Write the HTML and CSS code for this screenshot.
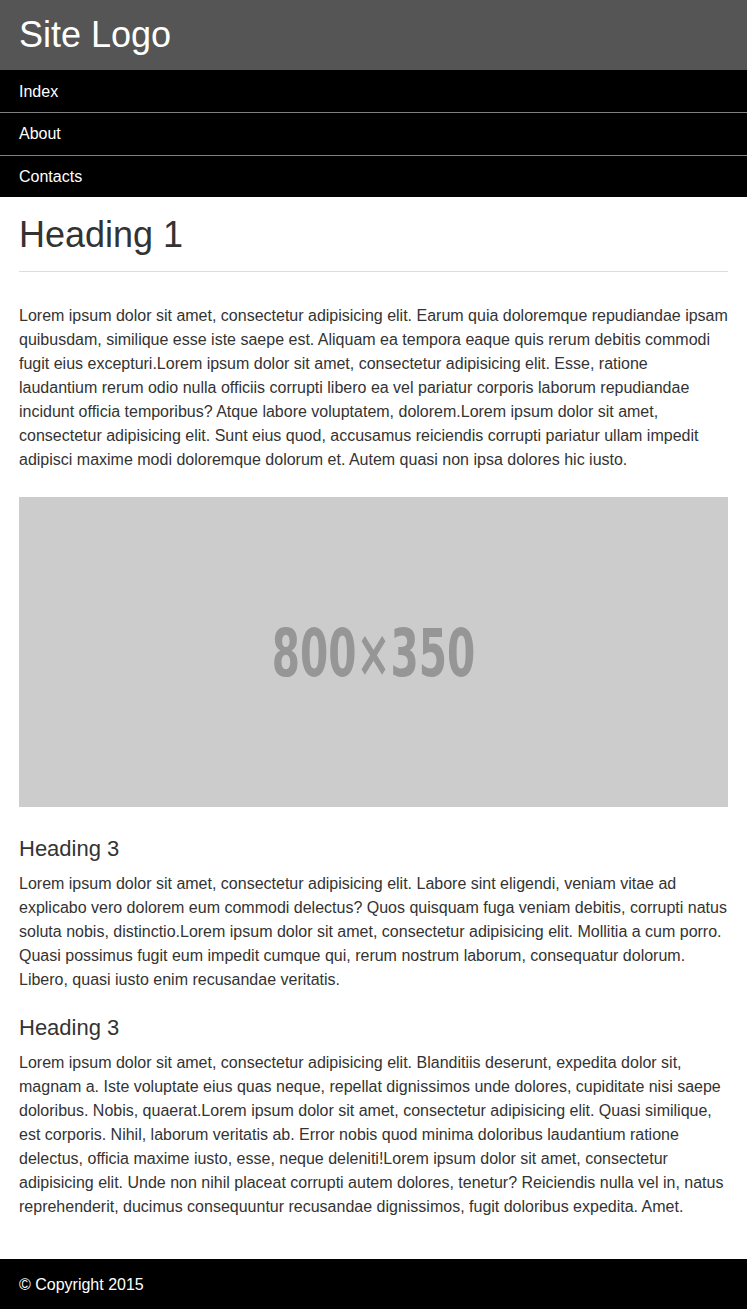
FILE: index.html
```html
<!DOCTYPE html>
<html lang="en">
<head>
<meta charset="utf-8">
<title>Site</title>
<link rel="stylesheet" href="styles.css">
</head>
<body>
<header class="site-header">
  <div class="logo">Site Logo</div>
</header>
<nav class="site-nav">
  <a class="nav-item" href="#">Index</a>
  <a class="nav-item" href="#">About</a>
  <a class="nav-item" href="#">Contacts</a>
</nav>
<main class="content">
  <div class="page-header">
    <h1>Heading 1</h1>
  </div>
  <p class="lead-text">Lorem ipsum dolor sit amet, consectetur adipisicing elit. Earum quia doloremque repudiandae ipsam quibusdam, similique esse iste saepe est. Aliquam ea tempora eaque quis rerum debitis commodi fugit eius excepturi.Lorem ipsum dolor sit amet, consectetur adipisicing elit. Esse, ratione laudantium rerum odio nulla officiis corrupti libero ea vel pariatur corporis laborum repudiandae incidunt officia temporibus? Atque labore voluptatem, dolorem.Lorem ipsum dolor sit amet, consectetur adipisicing elit. Sunt eius quod, accusamus reiciendis corrupti pariatur ullam impedit adipisci maxime modi doloremque dolorum et. Autem quasi non ipsa dolores hic iusto.</p>
  <div class="placeholder"><span class="placeholder-text">800×350</span></div>
  <h3>Heading 3</h3>
  <p>Lorem ipsum dolor sit amet, consectetur adipisicing elit. Labore sint eligendi, veniam vitae ad explicabo vero dolorem eum commodi delectus? Quos quisquam fuga veniam debitis, corrupti natus soluta nobis, distinctio.Lorem ipsum dolor sit amet, consectetur adipisicing elit. Mollitia a cum porro. Quasi possimus fugit eum impedit cumque qui, rerum nostrum laborum, consequatur dolorum. Libero, quasi iusto enim recusandae veritatis.</p>
  <h3>Heading 3</h3>
  <p>Lorem ipsum dolor sit amet, consectetur adipisicing elit. Blanditiis deserunt, expedita dolor sit, magnam a. Iste voluptate eius quas neque, repellat dignissimos unde dolores, cupiditate nisi saepe doloribus. Nobis, quaerat.Lorem ipsum dolor sit amet, consectetur adipisicing elit. Quasi similique, est corporis. Nihil, laborum veritatis ab. Error nobis quod minima doloribus laudantium ratione delectus, officia maxime iusto, esse, neque deleniti!Lorem ipsum dolor sit amet, consectetur adipisicing elit. Unde non nihil placeat corrupti autem dolores, tenetur? Reiciendis nulla vel in, natus reprehenderit, ducimus consequuntur recusandae dignissimos, fugit doloribus expedita. Amet.</p>
</main>
<footer class="site-footer">© Copyright 2015</footer>
</body>
</html>
```
FILE: styles.css
```css
* { box-sizing: border-box; }
html, body {
  margin: 0;
  padding: 0;
}
body {
  font-family: "Liberation Sans", Arial, sans-serif;
  font-size: 16px;
  line-height: 24px;
  color: #333;
  background: #fff;
}
.site-header {
  background: #555;
  height: 70px;
  padding: 0 19px;
  display: flex;
  align-items: center;
}
.logo {
  color: #fff;
  font-size: 36px;
  line-height: 40px;
}
.site-nav {
  background: #000;
  display: flex;
  flex-direction: column;
}
.nav-item {
  display: block;
  color: #fff;
  text-decoration: none;
  font-size: 16px;
  height: 43px;
  line-height: 42px;
  padding: 0 19px;
  border-bottom: 1px solid #808080;
}
.nav-item:first-child {
  padding-top: 1px;
}
.nav-item:last-child {
  border-bottom: none;
  height: 41px;
}
.content {
  padding: 18px 19px 40px;
}
.page-header {
  padding-bottom: 16px;
  border-bottom: 1px solid #ddd;
  margin-bottom: 32px;
}
h1 {
  margin: 0;
  font-size: 36px;
  line-height: 40px;
  font-weight: normal;
}
p {
  margin: 0;
}
.lead-text {
  margin-bottom: 25px;
}
.placeholder {
  background: #ccc;
  height: 310px;
  display: flex;
  align-items: center;
  justify-content: center;
  margin-bottom: 29px;
}
.placeholder-text {
  color: #969696;
  font-family: "DejaVu Sans", sans-serif;
  font-weight: bold;
  font-size: 66px;
  line-height: 1;
  transform: scaleX(0.615);
  display: inline-block;
  margin-top: 4px;
}
h3 {
  margin: 0 0 10px;
  font-size: 22px;
  line-height: 26px;
  font-weight: normal;
}
p + h3 {
  margin-top: 23px;
}
.site-footer {
  background: #000;
  color: #fff;
  height: 50px;
  line-height: 51px;
  padding: 0 19px;
}
```
